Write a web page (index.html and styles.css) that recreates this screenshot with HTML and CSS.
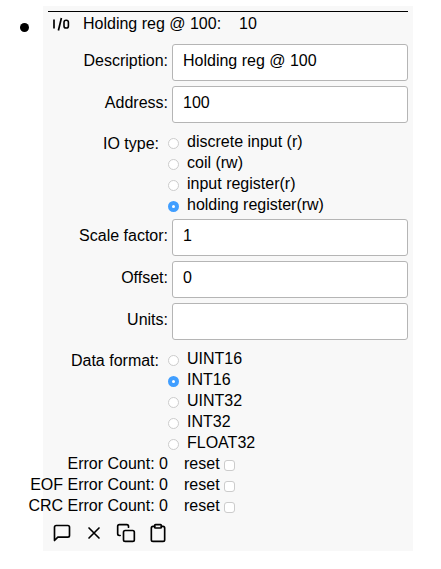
FILE: index.html
```html
<!DOCTYPE html>
<html lang="en">
<head>
<meta charset="utf-8">
<title>Modbus IO</title>
<link rel="stylesheet" href="styles.css">
</head>
<body>
<ul class="nodes">
  <li class="node">
    <form class="panel">
      <header class="head">
        <svg class="io" width="20" height="20" viewBox="0 0 20 20" fill="none" stroke="#000" stroke-width="1.7"><path d="M3 5.5v9M10.4 4L7.4 16.5"/><rect x="13" y="6.2" width="4.4" height="7.8" rx="2.1" stroke-width="1.6"/></svg>
        <span>Holding reg @ 100:</span>
        <span class="value">10</span>
      </header>

      <div class="row"><label class="name" for="desc">Description:</label><input class="text" id="desc" type="text" value="Holding reg @ 100"></div>
      <div class="row"><label class="name" for="addr">Address:</label><input class="text" id="addr" type="text" value="100"></div>

      <div class="group group-spaced" role="radiogroup" aria-labelledby="io-type">
        <span class="group-name" id="io-type">IO type:</span>
        <div class="options">
          <label class="option"><input class="radio" type="radio" name="io">discrete input (r)</label>
          <label class="option"><input class="radio" type="radio" name="io">coil (rw)</label>
          <label class="option"><input class="radio" type="radio" name="io">input register(r)</label>
          <label class="option"><input class="radio" type="radio" name="io" checked>holding register(rw)</label>
        </div>
      </div>

      <div class="row"><label class="name" for="scale">Scale factor:</label><input class="text" id="scale" type="text" value="1"></div>
      <div class="row"><label class="name" for="offset">Offset:</label><input class="text" id="offset" type="text" value="0"></div>
      <div class="row"><label class="name" for="units">Units:</label><input class="text" id="units" type="text"></div>

      <div class="group" role="radiogroup" aria-labelledby="format">
        <span class="group-name" id="format">Data format:</span>
        <div class="options">
          <label class="option"><input class="radio" type="radio" name="format">UINT16</label>
          <label class="option"><input class="radio" type="radio" name="format" checked>INT16</label>
          <label class="option"><input class="radio" type="radio" name="format">UINT32</label>
          <label class="option"><input class="radio" type="radio" name="format">INT32</label>
          <label class="option"><input class="radio" type="radio" name="format">FLOAT32</label>
        </div>
      </div>

      <div class="count"><span class="name">Error Count: 0</span><label class="reset">reset<input class="check" type="checkbox"></label></div>
      <div class="count"><span class="name">EOF Error Count: 0</span><label class="reset">reset<input class="check" type="checkbox"></label></div>
      <div class="count"><span class="name">CRC Error Count: 0</span><label class="reset">reset<input class="check" type="checkbox"></label></div>

      <footer class="actions">
        <button class="action" type="button" aria-label="Message"><svg class="icon" viewBox="0 0 24 24"><path d="M21 15a2 2 0 0 1-2 2H7l-4 4V5a2 2 0 0 1 2-2h14a2 2 0 0 1 2 2z"/></svg></button>
        <button class="action" type="button" aria-label="Delete"><svg class="icon" viewBox="0 0 24 24"><path d="M18 6L6 18M6 6l12 12"/></svg></button>
        <button class="action" type="button" aria-label="Copy"><svg class="icon" viewBox="0 0 24 24"><rect x="9" y="9" width="13" height="13" rx="2"/><path d="M5 15H4a2 2 0 0 1-2-2V4a2 2 0 0 1 2-2h9a2 2 0 0 1 2 2v1"/></svg></button>
        <button class="action" type="button" aria-label="Paste"><svg class="icon" viewBox="0 0 24 24"><path d="M16 4h2a2 2 0 0 1 2 2v14a2 2 0 0 1-2 2H6a2 2 0 0 1-2-2V6a2 2 0 0 1 2-2h2"/><rect x="8" y="2" width="8" height="4" rx="1"/></svg></button>
      </footer>
    </form>
  </li>
</ul>
</body>
</html>
```
FILE: styles.css
```css
* {
  box-sizing: border-box;
}

body {
  margin: 0;
  background: #fff;
  color: #000;
  font: 16px/21px "Liberation Sans", Arial, sans-serif;
}

.nodes {
  margin: 0;
  padding: 6px 28px 18px 20px;
  list-style: none;
}

.node {
  display: flex;
}

.node::before {
  content: "";
  flex: none;
  width: 9px;
  height: 9px;
  margin: 17px 14px 0 0;
  border-radius: 50%;
  background: #000;
}

.panel {
  flex: 1;
  min-width: 0;
  padding: 5px;
  background: #f8f8f8;
}

.head {
  display: flex;
  align-items: center;
  padding: 1px 0 7px 3px;
  border-top: 1px solid #000;
}

.io {
  margin: 0 12px 0 0;
}

.value {
  margin-left: 18px;
}

.row {
  display: flex;
  align-items: center;
  gap: 4px;
  height: 42px;
}

.name {
  display: flex;
  flex: none;
  justify-content: flex-end;
  width: 120px;
  white-space: nowrap;
}

.row .name {
  padding-bottom: 4px;
}

.text {
  flex: 1;
  min-width: 0;
  height: 37px;
  padding: 0 10px 3px;
  border: 1px solid #b5b5b5;
  border-radius: 3px;
  background: #fff;
  color: inherit;
  font: inherit;
}

.group {
  display: flex;
  gap: 9px;
  padding-top: 6px;
}

.group-spaced {
  padding-bottom: 1px;
}

.group-name {
  width: 111px;
  padding-top: 2px;
  text-align: right;
}

.option {
  display: flex;
  align-items: center;
  gap: 8px;
}

.radio,
.check {
  appearance: none;
  flex: none;
  width: 11px;
  height: 11px;
  margin: 3px 0 0;
  border: 1px solid #ccc;
  border-radius: 50%;
  background: #fff;
}

.radio:checked {
  border: 4px solid #409eff;
}

.check {
  border-radius: 3px;
}

.count {
  display: flex;
  gap: 16px;
}

.reset {
  display: flex;
  align-items: center;
  gap: 4px;
}

.actions {
  display: flex;
  gap: 12px;
  padding: 7px 4px 3px;
}

.action {
  width: 20px;
  height: 20px;
  padding: 0;
  border: 0;
  background: none;
}

.icon {
  display: block;
  width: 20px;
  height: 20px;
  fill: none;
  stroke: #000;
  stroke-width: 2;
  stroke-linecap: round;
  stroke-linejoin: round;
}
```
